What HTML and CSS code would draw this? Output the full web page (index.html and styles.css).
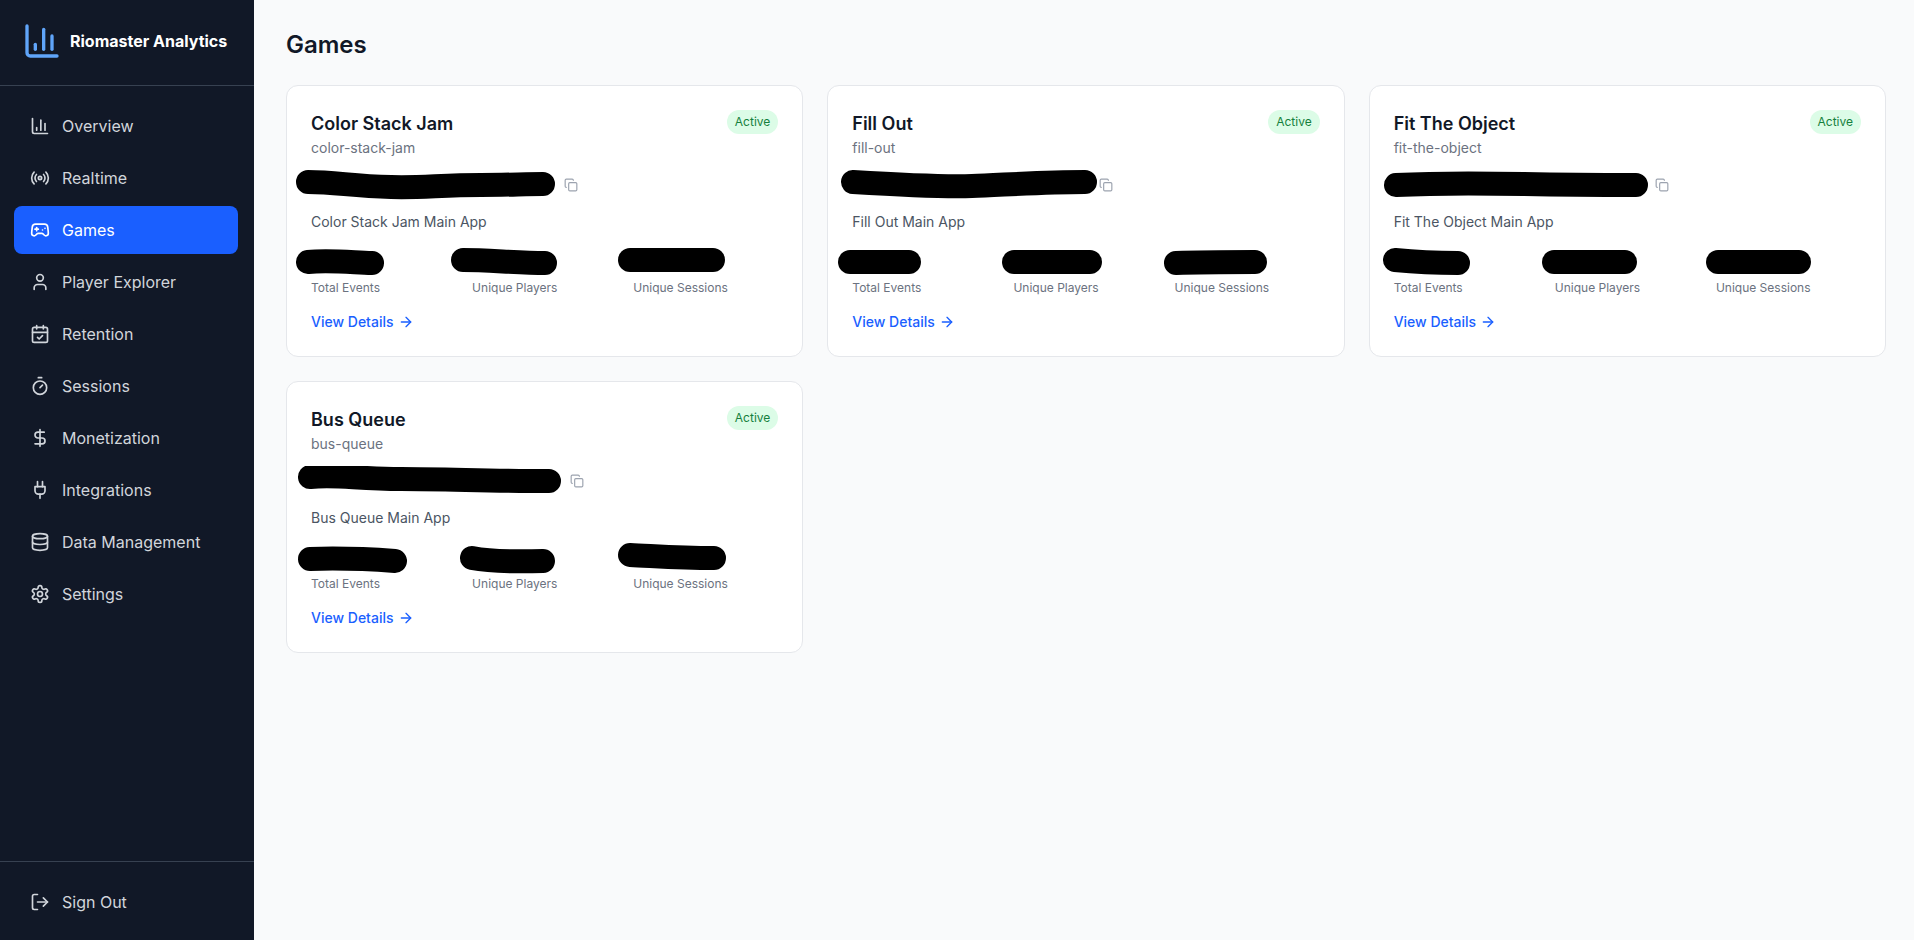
FILE: index.html
```html
<!DOCTYPE html>
<html lang="en">
<head>
    <meta charset="UTF-8">
    <meta name="viewport" content="width=device-width, initial-scale=1.0">
    <title>Games - Riomaster Analytics</title>
    <link rel="stylesheet" href="styles.css">
</head>
<body>

    <!-- Sidebar -->
    <aside class="sidebar">
        <div class="brand">
            <svg class="brand-logo" viewBox="0 0 24 24"><path d="M3 3v16a2 2 0 0 0 2 2h16"/><path d="M18 17V9"/><path d="M13 17V5"/><path d="M8 17v-3"/></svg>
            <span>Riomaster Analytics</span>
        </div>
        <nav class="nav">
            <a class="nav-item"><svg class="icon" viewBox="0 0 24 24"><path d="M3 3v16a2 2 0 0 0 2 2h16"/><path d="M18 17V9"/><path d="M13 17V5"/><path d="M8 17v-3"/></svg>Overview</a>
            <a class="nav-item"><svg class="icon" viewBox="0 0 24 24"><path d="M16.247 7.761a6 6 0 0 1 0 8.478"/><path d="M19.075 4.933a10 10 0 0 1 0 14.134"/><path d="M4.925 19.067a10 10 0 0 1 0-14.134"/><path d="M7.753 16.239a6 6 0 0 1 0-8.478"/><circle cx="12" cy="12" r="2"/></svg>Realtime</a>
            <a class="nav-item active"><svg class="icon" viewBox="0 0 24 24"><path d="M6 11h4"/><path d="M8 9v4"/><path d="M15 12h.01"/><path d="M18 10h.01"/><path d="M17.32 5H6.68a4 4 0 0 0-3.978 3.59c-.006.052-.01.101-.017.152C2.604 9.416 2 14.456 2 16a3 3 0 0 0 3 3c1 0 1.5-.5 2-1l1.414-1.414A2 2 0 0 1 9.828 16h4.344a2 2 0 0 1 1.414.586L17 18c.5.5 1 1 2 1a3 3 0 0 0 3-3c0-1.545-.604-6.584-.685-7.258-.007-.05-.011-.1-.017-.151A4 4 0 0 0 17.32 5z"/></svg>Games</a>
            <a class="nav-item"><svg class="icon" viewBox="0 0 24 24"><path d="M19 21v-2a4 4 0 0 0-4-4H9a4 4 0 0 0-4 4v2"/><circle cx="12" cy="7" r="4"/></svg>Player Explorer</a>
            <a class="nav-item"><svg class="icon" viewBox="0 0 24 24"><path d="M8 2v4"/><path d="M16 2v4"/><rect x="3" y="4" width="18" height="18" rx="2"/><path d="M3 10h18"/><path d="m9 16 2 2 4-4"/></svg>Retention</a>
            <a class="nav-item"><svg class="icon" viewBox="0 0 24 24"><path d="M10 2h4"/><path d="M12 14l3-3"/><circle cx="12" cy="14" r="8"/></svg>Sessions</a>
            <a class="nav-item"><svg class="icon" viewBox="0 0 24 24"><path d="M12 2v20"/><path d="M17 5H9.5a3.5 3.5 0 0 0 0 7h5a3.5 3.5 0 0 1 0 7H6"/></svg>Monetization</a>
            <a class="nav-item"><svg class="icon" viewBox="0 0 24 24"><path d="M12 22v-5"/><path d="M9 8V2"/><path d="M15 8V2"/><path d="M18 8v5a4 4 0 0 1-4 4h-4a4 4 0 0 1-4-4V8Z"/></svg>Integrations</a>
            <a class="nav-item"><svg class="icon" viewBox="0 0 24 24"><ellipse cx="12" cy="5" rx="9" ry="3"/><path d="M3 5V19A9 3 0 0 0 21 19V5"/><path d="M3 12A9 3 0 0 0 21 12"/></svg>Data Management</a>
            <a class="nav-item"><svg class="icon" viewBox="0 0 24 24"><path d="M12.22 2h-.44a2 2 0 0 0-2 2v.18a2 2 0 0 1-1 1.73l-.43.25a2 2 0 0 1-2 0l-.15-.08a2 2 0 0 0-2.73.73l-.22.38a2 2 0 0 0 .73 2.73l.15.1a2 2 0 0 1 1 1.72v.51a2 2 0 0 1-1 1.74l-.15.09a2 2 0 0 0-.73 2.73l.22.38a2 2 0 0 0 2.73.73l.15-.08a2 2 0 0 1 2 0l.43.25a2 2 0 0 1 1 1.73V20a2 2 0 0 0 2 2h.44a2 2 0 0 0 2-2v-.18a2 2 0 0 1 1-1.73l.43-.25a2 2 0 0 1 2 0l.15.08a2 2 0 0 0 2.73-.73l.22-.39a2 2 0 0 0-.73-2.73l-.15-.08a2 2 0 0 1-1-1.74v-.5a2 2 0 0 1 1-1.74l.15-.09a2 2 0 0 0 .73-2.73l-.22-.38a2 2 0 0 0-2.73-.73l-.15.08a2 2 0 0 1-2 0l-.43-.25a2 2 0 0 1-1-1.73V4a2 2 0 0 0-2-2z"/><circle cx="12" cy="12" r="3"/></svg>Settings</a>
        </nav>
        <div class="sidebar-footer">
            <a class="nav-item"><svg class="icon" viewBox="0 0 24 24"><path d="M9 21H5a2 2 0 0 1-2-2V5a2 2 0 0 1 2-2h4"/><path d="m16 17 5-5-5-5"/><path d="M21 12H9"/></svg>Sign Out</a>
        </div>
    </aside>

    <!-- Main content -->
    <main class="main">
        <h1 class="page-title">Games</h1>
        <div class="game-grid">

            <div class="game-card">
                <div class="card-head">
                    <div>
                        <h2 class="game-name">Color Stack Jam</h2>
                        <p class="game-slug">color-stack-jam</p>
                    </div>
                    <span class="badge">Active</span>
                </div>
                <div class="key-row">
                    <svg class="key-mask" width="272" height="30"><path d="M17 12C45 12 60 16 100 17C130 18 150 15 190 15C215 15 235 14 252 14"/></svg>
                    <svg class="copy-icon" viewBox="0 0 24 24"><rect x="8" y="8" width="14" height="14" rx="2"/><path d="M4 16c-1.1 0-2-.9-2-2V4c0-1.1.9-2 2-2h10c1.1 0 2 .9 2 2"/></svg>
                </div>
                <p class="game-desc">Color Stack Jam Main App</p>
                <div class="stats">
                    <div class="stat"><div class="stat-value"><svg class="stat-mask" width="150" height="40"><path d="M21 18C40 16 60 18 85 19"/></svg></div><div class="stat-label">Total Events</div></div>
                    <div class="stat"><div class="stat-value"><svg class="stat-mask" width="150" height="40"><path d="M15 16C40 16 70 19 97 19"/></svg></div><div class="stat-label">Unique Players</div></div>
                    <div class="stat"><div class="stat-value"><svg class="stat-mask" width="150" height="40"><path d="M21 16H104"/></svg></div><div class="stat-label">Unique Sessions</div></div>
                </div>
                <a class="details-link">View Details <svg class="arrow" viewBox="0 0 24 24"><path d="M5 12h14"/><path d="m12 5 7 7-7 7"/></svg></a>
            </div>

            <div class="game-card">
                <div class="card-head">
                    <div>
                        <h2 class="game-name">Fill Out</h2>
                        <p class="game-slug">fill-out</p>
                    </div>
                    <span class="badge">Active</span>
                </div>
                <div class="key-row">
                    <svg class="key-mask" width="266" height="30"><path d="M21 12C70 15 110 17 140 16S210 12 253 12"/></svg>
                    <svg class="copy-icon" viewBox="0 0 24 24"><rect x="8" y="8" width="14" height="14" rx="2"/><path d="M4 16c-1.1 0-2-.9-2-2V4c0-1.1.9-2 2-2h10c1.1 0 2 .9 2 2"/></svg>
                </div>
                <p class="game-desc">Fill Out Main App</p>
                <div class="stats">
                    <div class="stat"><div class="stat-value"><svg class="stat-mask" width="150" height="40"><path d="M22 18H81"/></svg></div><div class="stat-label">Total Events</div></div>
                    <div class="stat"><div class="stat-value"><svg class="stat-mask" width="150" height="40"><path d="M25 18H101"/></svg></div><div class="stat-label">Unique Players</div></div>
                    <div class="stat"><div class="stat-value"><svg class="stat-mask" width="150" height="40"><path d="M25 19C50 18 80 18 104 18"/></svg></div><div class="stat-label">Unique Sessions</div></div>
                </div>
                <a class="details-link">View Details <svg class="arrow" viewBox="0 0 24 24"><path d="M5 12h14"/><path d="m12 5 7 7-7 7"/></svg></a>
            </div>

            <div class="game-card">
                <div class="card-head">
                    <div>
                        <h2 class="game-name">Fit The Object</h2>
                        <p class="game-slug">fit-the-object</p>
                    </div>
                    <span class="badge">Active</span>
                </div>
                <div class="key-row">
                    <svg class="key-mask" width="280" height="30"><path d="M22 15C60 13 100 13 150 14S220 15 262 15"/></svg>
                    <svg class="copy-icon" viewBox="0 0 24 24"><rect x="8" y="8" width="14" height="14" rx="2"/><path d="M4 16c-1.1 0-2-.9-2-2V4c0-1.1.9-2 2-2h10c1.1 0 2 .9 2 2"/></svg>
                </div>
                <p class="game-desc">Fit The Object Main App</p>
                <div class="stats">
                    <div class="stat"><div class="stat-value"><svg class="stat-mask" width="150" height="40"><path d="M25 16C45 18 65 19 88 19"/></svg></div><div class="stat-label">Total Events</div></div>
                    <div class="stat"><div class="stat-value"><svg class="stat-mask" width="150" height="40"><path d="M23 18H94"/></svg></div><div class="stat-label">Unique Players</div></div>
                    <div class="stat"><div class="stat-value"><svg class="stat-mask" width="150" height="40"><path d="M26 18H107"/></svg></div><div class="stat-label">Unique Sessions</div></div>
                </div>
                <a class="details-link">View Details <svg class="arrow" viewBox="0 0 24 24"><path d="M5 12h14"/><path d="m12 5 7 7-7 7"/></svg></a>
            </div>

            <div class="game-card">
                <div class="card-head">
                    <div>
                        <h2 class="game-name">Bus Queue</h2>
                        <p class="game-slug">bus-queue</p>
                    </div>
                    <span class="badge">Active</span>
                </div>
                <div class="key-row">
                    <svg class="key-mask" width="278" height="30"><path d="M19 11C45 8 65 13 110 13S200 15 258 15"/></svg>
                    <svg class="copy-icon" viewBox="0 0 24 24"><rect x="8" y="8" width="14" height="14" rx="2"/><path d="M4 16c-1.1 0-2-.9-2-2V4c0-1.1.9-2 2-2h10c1.1 0 2 .9 2 2"/></svg>
                </div>
                <p class="game-desc">Bus Queue Main App</p>
                <div class="stats">
                    <div class="stat"><div class="stat-value"><svg class="stat-mask" width="150" height="40"><path d="M23 19C50 18 80 19 108 21"/></svg></div><div class="stat-label">Total Events</div></div>
                    <div class="stat"><div class="stat-value"><svg class="stat-mask" width="150" height="40"><path d="M24 18C40 21 60 22 95 21"/></svg></div><div class="stat-label">Unique Players</div></div>
                    <div class="stat"><div class="stat-value"><svg class="stat-mask" width="150" height="40"><path d="M21 15C45 16 70 18 105 18"/></svg></div><div class="stat-label">Unique Sessions</div></div>
                </div>
                <a class="details-link">View Details <svg class="arrow" viewBox="0 0 24 24"><path d="M5 12h14"/><path d="m12 5 7 7-7 7"/></svg></a>
            </div>

        </div>
    </main>

</body>
</html>
```

FILE: styles.css
```css
/* Page */
* {
    box-sizing: border-box;
}

body {
    margin: 0;
    height: 100vh;
    display: flex;
    overflow: hidden;
    font-family: Inter, "Noto Sans", sans-serif;
    background-color: #f9fafb;
    color: #111827;
}

/* Sidebar */
.sidebar {
    width: 254px;
    flex-shrink: 0;
    display: flex;
    flex-direction: column;
    background-color: #111827;
}

.brand {
    height: 86px;
    display: flex;
    align-items: center;
    gap: 8px;
    padding: 0 0 4px 22px;
    border-bottom: 1px solid #374151;
    color: #fff;
    font-size: 16px;
    font-weight: 700;
}

.brand-logo {
    width: 40px;
    height: 40px;
    fill: none;
    stroke: #60a5fa;
    stroke-width: 2;
    stroke-linecap: round;
    stroke-linejoin: round;
}

.nav {
    flex: 1;
    display: flex;
    flex-direction: column;
    gap: 4px;
    padding: 16px 16px 0 14px;
}

.nav-item {
    height: 48px;
    display: flex;
    align-items: center;
    gap: 12px;
    padding: 0 16px;
    border-radius: 8px;
    color: #d1d5db;
    font-size: 16px;
    font-weight: 400;
}

.nav-item.active {
    background-color: #1a5fff;
    color: #fff;
}

.icon {
    width: 20px;
    height: 20px;
    flex-shrink: 0;
    fill: none;
    stroke: currentColor;
    stroke-width: 2;
    stroke-linecap: round;
    stroke-linejoin: round;
}

.sidebar-footer {
    padding: 16px 16px 14px 14px;
    border-top: 1px solid #374151;
}

/* Main area */
.main {
    flex: 1;
    padding: 29px 28px 0 32px;
}

.page-title {
    margin: 0 0 24px;
    font-size: 24px;
    line-height: 32px;
    font-weight: 600;
}

.game-grid {
    display: grid;
    grid-template-columns: repeat(3, 1fr);
    gap: 24px;
}

/* Game card */
.game-card {
    padding: 24px;
    background-color: #fff;
    border: 1px solid #e5e7eb;
    border-radius: 12px;
}

.card-head {
    display: flex;
    justify-content: space-between;
    align-items: flex-start;
}

.game-name {
    margin: 0;
    font-size: 18px;
    line-height: 28px;
    font-weight: 600;
}

.game-slug {
    margin: 0;
    font-size: 14px;
    line-height: 20px;
    color: #6b7280;
}

.badge {
    padding: 0 8px;
    border-radius: 9999px;
    background-color: #dcfce7;
    color: #15803d;
    font-size: 12px;
    line-height: 24px;
    font-weight: 400;
}

/* Hidden API key row */
.key-row {
    height: 30px;
    display: flex;
    align-items: center;
    margin: 12px 0;
}

.key-mask {
    flex-shrink: 0;
    margin-left: -20px;
}

.key-mask path,
.stat-mask path {
    fill: none;
    stroke: #000;
    stroke-width: 24;
    stroke-linecap: round;
    stroke-linejoin: round;
}

.copy-icon {
    width: 14px;
    height: 14px;
    margin-left: 1px;
    fill: none;
    stroke: #9ca3af;
    stroke-width: 2;
    stroke-linecap: round;
    stroke-linejoin: round;
}

.game-desc {
    margin: 0 0 20px;
    font-size: 14px;
    line-height: 20px;
    color: #4b5563;
}

/* Stats */
.stats {
    display: grid;
    grid-template-columns: repeat(3, 1fr);
    gap: 16px;
    margin-bottom: 16px;
}

.stat-value {
    position: relative;
    height: 28px;
}

.stat-mask {
    position: absolute;
    left: -24px;
    top: -8px;
}

.stat-label {
    font-size: 12px;
    line-height: 16px;
    color: #6b7280;
}

.details-link {
    display: flex;
    align-items: center;
    gap: 4px;
    color: #1a5fff;
    font-size: 14px;
    line-height: 20px;
    font-weight: 500;
}

.arrow {
    width: 16px;
    height: 16px;
    fill: none;
    stroke: currentColor;
    stroke-width: 2;
    stroke-linecap: round;
    stroke-linejoin: round;
}
```
